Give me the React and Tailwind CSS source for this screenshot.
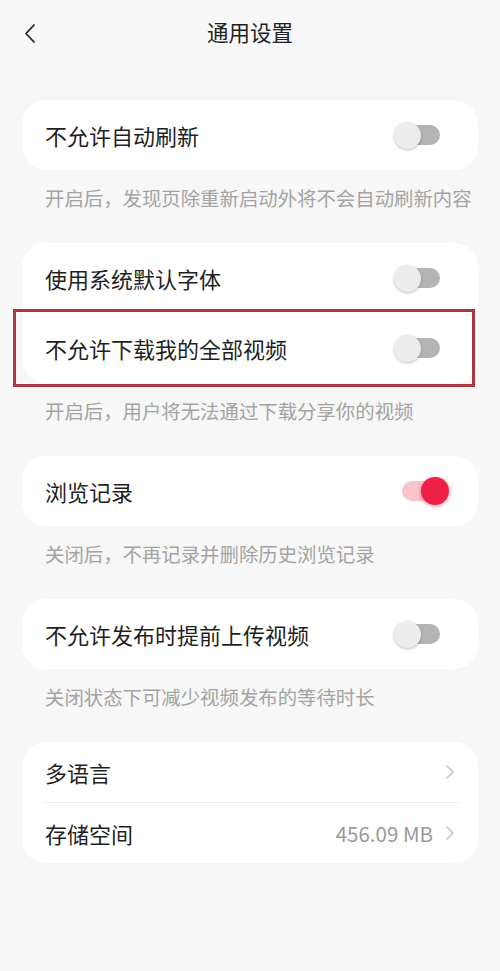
import React from "react";

const font = { fontFamily: '"Noto Sans CJK SC", "Noto Sans", sans-serif' };

// plain switch: gray track with light thumb when off, red when on
const Toggle = ({ on }) => {
  if (on) {
    return (
      <div className="relative w-[48px] h-[30px] mr-[-10px] flex items-center">
        <div className="absolute left-0 w-[34px] h-[20px] rounded-full bg-[#f9c3cb]" />
        <div className="absolute right-[1px] w-[28px] h-[28px] rounded-full bg-[#ef1f45] shadow-[0_1px_4px_rgba(239,31,69,0.45)]" />
      </div>
    );
  }
  return (
    <div className="relative w-[46px] h-[30px] flex items-center">
      <div className="absolute right-0 w-[34px] h-[20px] rounded-full bg-[#b4b4b4]" />
      <div className="absolute left-0 w-[27px] h-[27px] rounded-full bg-[#ececec] shadow-[0_1px_3px_rgba(0,0,0,0.25)]" />
    </div>
  );
};

const Chevron = () => (
  <svg width="10" height="16" viewBox="0 0 10 16" fill="none">
    <path d="M2 2l6 6-6 6" stroke="#c4c4c4" strokeWidth="1.6" strokeLinecap="round" strokeLinejoin="round" />
  </svg>
);

const SwitchRow = ({ label, on }) => (
  <div className="h-[70px] flex items-center justify-between pl-[23px] pr-[38px]">
    <span className="text-[22px] text-[#1f1f1f]">{label}</span>
    <Toggle on={on} />
  </div>
);

const Note = ({ children }) => (
  <p className="px-[45px] pt-[14px] pb-[31px] h-[73px] text-[19.4px] leading-[28px] text-[#a3a3a3] whitespace-nowrap">
    {children}
  </p>
);

const Card = ({ children }) => (
  <div className="mx-[22px] bg-white rounded-[24px]">{children}</div>
);

export default function App() {
  return (
    <div className="w-[500px] min-h-[971px] bg-[#f7f7f7]" style={font}>
      {/* top bar */}
      <div className="relative h-[64px] flex items-center justify-center">
        <svg className="absolute left-[23px] top-[23px]" width="14" height="21" viewBox="0 0 14 21" fill="none">
          <path d="M11 2L3 10.5 11 19" stroke="#222" strokeWidth="1.8" strokeLinecap="round" strokeLinejoin="round" />
        </svg>
        <h1 className="text-[21.5px] text-[#1f1f1f]">通用设置</h1>
      </div>

      <div className="pt-[36px]">
        <Card>
          <SwitchRow label="不允许自动刷新" />
        </Card>
        <Note>开启后，发现页除重新启动外将不会自动刷新内容</Note>

        <Card>
          <SwitchRow label="使用系统默认字体" />
          <div className="relative">
            <SwitchRow label="不允许下载我的全部视频" />
            <div className="absolute left-[-9px] right-[3px] top-[-4px] bottom-[-4px] border-[3px] border-[#ab3840] pointer-events-none" />
          </div>
        </Card>
        <Note>开启后，用户将无法通过下载分享你的视频</Note>

        <Card>
          <SwitchRow label="浏览记录" on />
        </Card>
        <Note>关闭后，不再记录并删除历史浏览记录</Note>

        <Card>
          <SwitchRow label="不允许发布时提前上传视频" />
        </Card>
        <Note>关闭状态下可减少视频发布的等待时长</Note>

        <Card>
          <div className="h-[60px] flex items-center justify-between pl-[23px] pr-[23px]">
            <span className="text-[22px] text-[#1f1f1f]">多语言</span>
            <Chevron />
          </div>
          <div className="mx-[20px] h-px bg-[#ececec]" />
          <div className="h-[60px] flex items-center justify-between pl-[23px] pr-[23px]">
            <span className="text-[22px] text-[#1f1f1f]">存储空间</span>
            <div className="flex items-center gap-[12px]">
              <span className="text-[20.5px] text-[#9a9a9a]">456.09 MB</span>
              <Chevron />
            </div>
          </div>
        </Card>
      </div>
    </div>
  );
}
